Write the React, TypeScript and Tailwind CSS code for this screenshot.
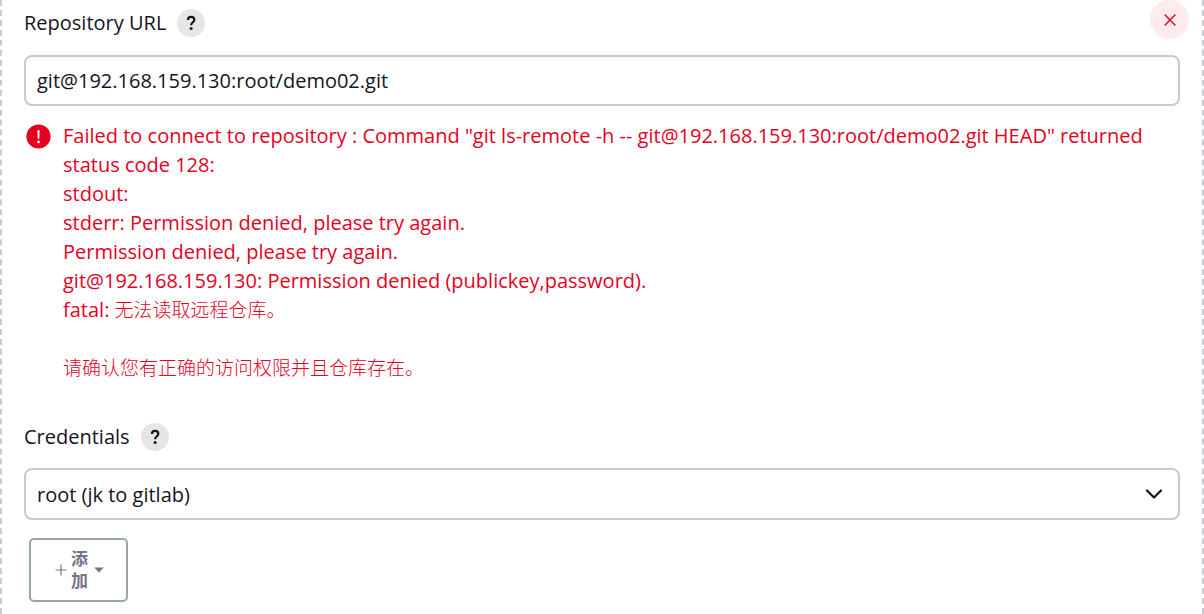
import { useState } from "react";

function HelpButton({ label }: { label: string }) {
  return (
    <button
      type="button"
      aria-label={label}
      className="flex size-7 shrink-0 items-center justify-center rounded-full bg-[#e6e6e6] text-[#14141f]"
    >
      <svg viewBox="0 0 28 28" className="size-7" fill="none" stroke="currentColor" strokeWidth="2.2" aria-hidden="true">
        <path d="M10.9 11.1c0-2 1.3-3.2 3.2-3.2s3.2 1.1 3.2 2.8c0 1.4-.8 2.1-1.7 2.8-.9.7-1.5 1.3-1.5 2.8" />
        <circle cx="14.1" cy="19.5" r="1.5" fill="currentColor" stroke="none" />
      </svg>
    </button>
  );
}

const errorText = `Failed to connect to repository : Command "git ls-remote -h -- git@192.168.159.130:root/demo02.git HEAD" returned status code 128:
stdout:
stderr: Permission denied, please try again.
Permission denied, please try again.
git@192.168.159.130: Permission denied (publickey,password).`;

export default function App() {
  const [url, setUrl] = useState("git@192.168.159.130:root/demo02.git");

  return (
    <main className="min-h-screen border-x-2 border-dashed border-[#c3ccd1] bg-white px-[22px] pb-3 font-['Open_Sans','Noto_Sans_CJK_SC',sans-serif] text-[20px] leading-[29px] text-[#14141f]">
      <div className="-mr-[9px] flex items-start justify-between">
        <div className="flex items-center gap-[11px] pt-2">
          <label htmlFor="repository-url">Repository URL</label>
          <HelpButton label="Help for Repository URL" />
        </div>
        <button
          type="button"
          aria-label="Remove repository"
          className="flex size-[39px] items-center justify-center rounded-full bg-[#fdebed] text-[#e6001f]"
        >
          <svg viewBox="0 0 12 12" className="size-3" fill="none" stroke="currentColor" strokeWidth="1.4" aria-hidden="true">
            <path d="M.6.6l10.8 10.8M11.4.6L.6 11.4" />
          </svg>
        </button>
      </div>

      <input
        id="repository-url"
        type="text"
        value={url}
        onChange={(event) => setUrl(event.target.value)}
        className="mt-4 block h-[51px] w-full rounded-lg border-2 border-[#c3ccd1] bg-white px-[11px] outline-none"
      />

      <div role="alert" className="mt-[15px] flex gap-3 pl-[2px] text-[#e6001f]">
        <svg viewBox="0 0 26 26" className="mt-[3px] size-[25px] shrink-0" aria-hidden="true">
          <circle cx="13" cy="13" r="12.6" fill="currentColor" />
          <path d="M11.8 6.5h2.4l-.4 8.8h-1.6z" fill="#fff" />
          <circle cx="13" cy="18.6" r="1.4" fill="#fff" />
        </svg>
        <div className="min-w-0">
          <p className="whitespace-pre-wrap">{errorText}</p>
          <p className="mb-7">
            fatal:{" "}
            <span lang="zh-CN" className="font-['Noto_Sans_CJK_SC',sans-serif] text-[19px] leading-none font-light">
              无法读取远程仓库。
            </span>
          </p>
          <p lang="zh-CN" className="font-['Noto_Sans_CJK_SC',sans-serif] text-[19px] font-light">
            请确认您有正确的访问权限并且仓库存在。
          </p>
        </div>
      </div>

      <div className="mt-[41px] flex items-center gap-[11px]">
        <label htmlFor="credentials">Credentials</label>
        <HelpButton label="Help for Credentials" />
      </div>

      <div className="relative mt-[17px]">
        <select
          id="credentials"
          className="block h-[52px] w-full appearance-none rounded-lg border-2 border-[#c3ccd1] bg-white pr-12 pl-[11px] outline-none"
        >
          <option>root (jk to gitlab)</option>
        </select>
        <svg
          viewBox="0 0 18 12"
          className="pointer-events-none absolute top-5 right-[17px] h-3 w-[18px]"
          fill="none"
          stroke="currentColor"
          strokeWidth="2.2"
          strokeLinecap="round"
          strokeLinejoin="round"
          aria-hidden="true"
        >
          <path d="M2 2.5l7 7 7-7" />
        </svg>
      </div>

      <button
        type="button"
        className="mt-[18px] ml-[5px] flex h-16 w-[99px] items-center justify-center gap-1 rounded-[5px] border-2 border-[#98a5af] bg-white pl-[2px] text-[17px] leading-[22px] font-bold text-[#73738c]"
      >
        <svg viewBox="0 0 12 12" className="size-3" fill="none" stroke="currentColor" strokeWidth="1.2" aria-hidden="true">
          <path d="M6 .5v11M.5 6h11" />
        </svg>
        <span lang="zh-CN" className="w-[17px]">添加</span>
        <svg viewBox="0 0 10 6" className="ml-[2px] h-[6px] w-[10px]" fill="currentColor" aria-hidden="true">
          <path d="M.3.5h9.4L5 5.4z" />
        </svg>
      </button>
    </main>
  );
}
